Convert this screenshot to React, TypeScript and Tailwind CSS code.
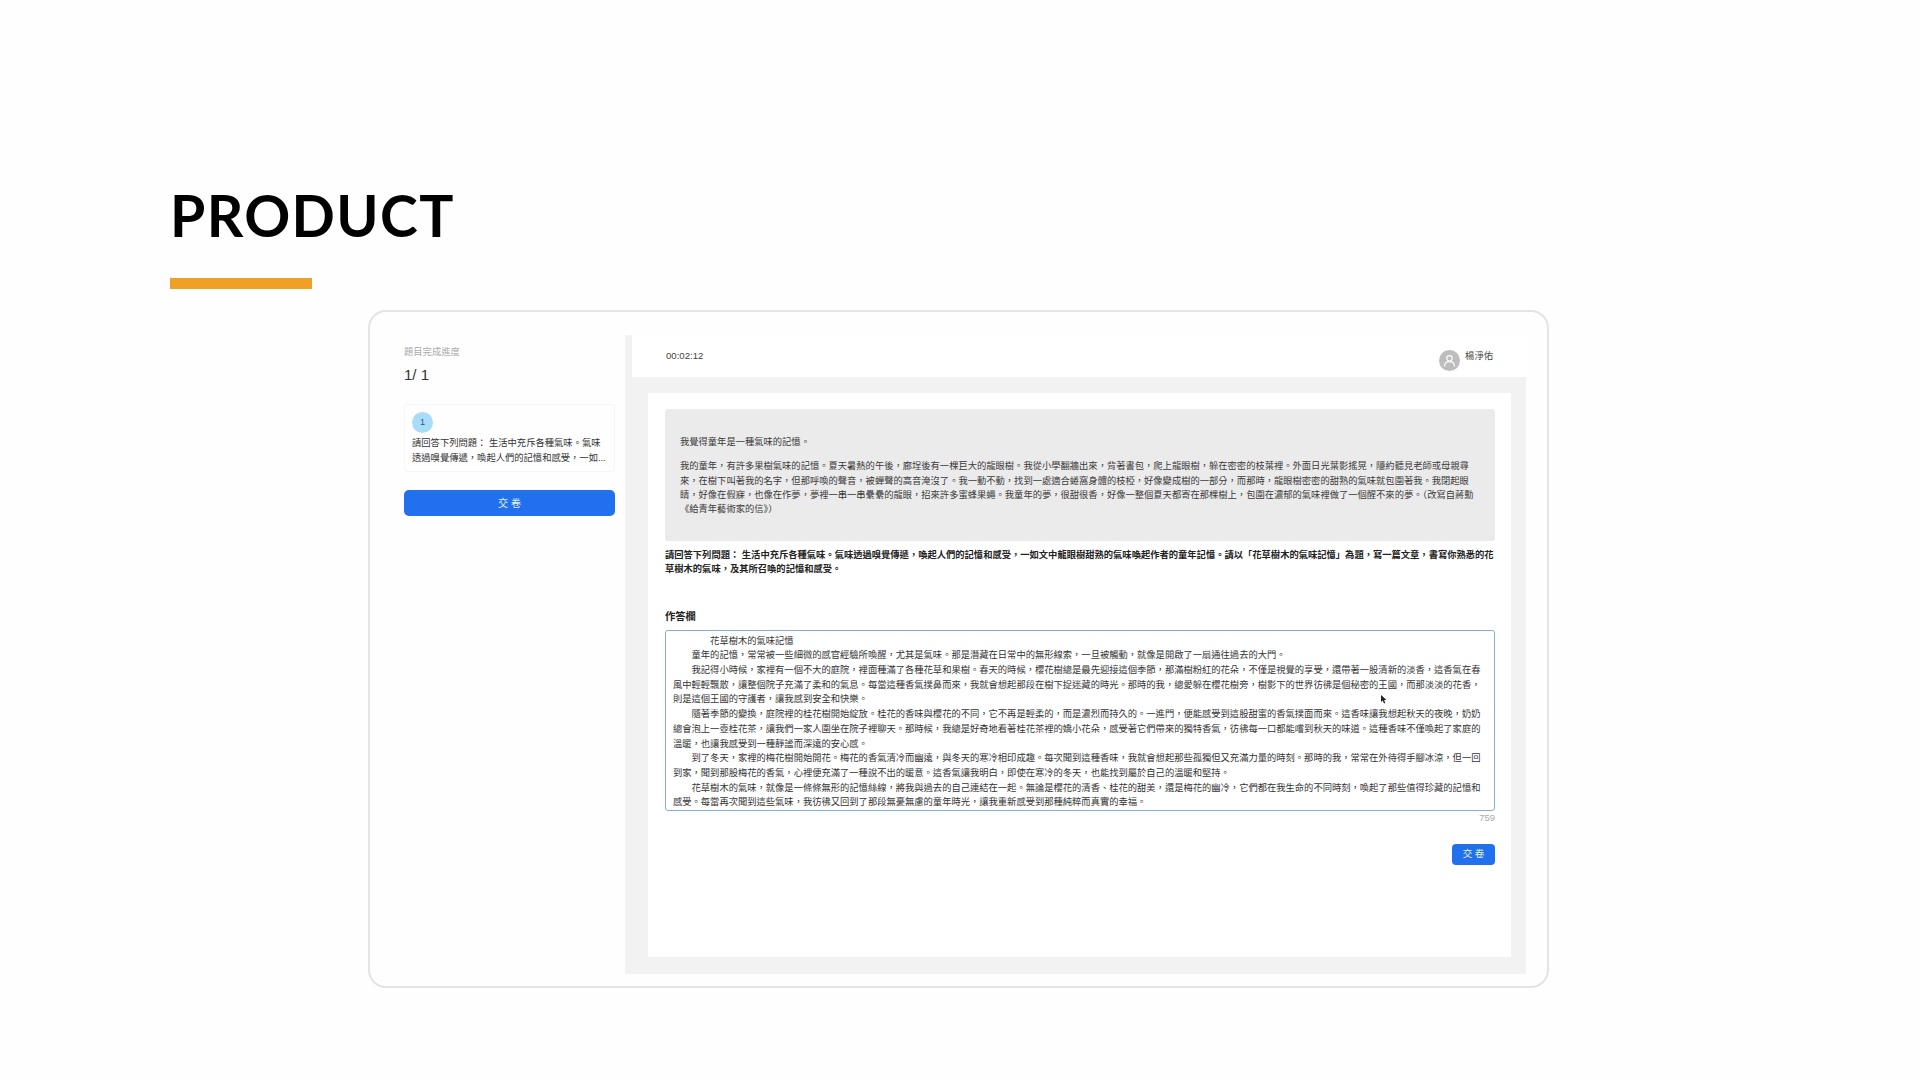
import React from "react";

const CJK = "font-['Liberation_Sans','Noto_Sans_CJK_TC',sans-serif]";

const passage = [
  "我的童年，有許多果樹氣味的記憶。夏天暑熱的午後，廊埕後有一棵巨大的龍眼樹。我從小學翻牆出來，背著書包，爬上龍眼樹，躲在密密的枝葉裡。外面日光葉影搖晃，隱約聽見老師或母親尋",
  "來，在樹下叫著我的名字，但那呼喚的聲音，被蟬聲的高音淹沒了。我一動不動，找到一處適合蜷窩身體的枝椏，好像變成樹的一部分，而那時，龍眼樹密密的甜熟的氣味就包圍著我。我閉起眼",
  "睛，好像在假寐，也像在作夢，夢裡一串一串纍纍的龍眼，招來許多蜜蜂果蠅。我童年的夢，很甜很香，好像一整個夏天都寄在那棵樹上，包圍在濃郁的氣味裡做了一個醒不來的夢。（改寫自蔣勳",
  "《給青年藝術家的信》）",
];

const answer = [
  "　　　　花草樹木的氣味記憶",
  "　　童年的記憶，常常被一些細微的感官經驗所喚醒，尤其是氣味。那是潛藏在日常中的無形線索，一旦被觸動，就像是開啟了一扇通往過去的大門。",
  "　　我記得小時候，家裡有一個不大的庭院，裡面種滿了各種花草和果樹。春天的時候，櫻花樹總是最先迎接這個季節，那滿樹粉紅的花朵，不僅是視覺的享受，還帶著一股清新的淡香，這香氣在春",
  "風中輕輕飄散，讓整個院子充滿了柔和的氣息。每當這種香氣撲鼻而來，我就會想起那段在樹下捉迷藏的時光。那時的我，總愛躲在櫻花樹旁，樹影下的世界彷彿是個秘密的王國，而那淡淡的花香，",
  "則是這個王國的守護者，讓我感到安全和快樂。",
  "　　隨著季節的變換，庭院裡的桂花樹開始綻放。桂花的香味與櫻花的不同，它不再是輕柔的，而是濃烈而持久的。一進門，便能感受到這股甜蜜的香氣撲面而來。這香味讓我想起秋天的夜晚，奶奶",
  "總會泡上一壺桂花茶，讓我們一家人圍坐在院子裡聊天。那時候，我總是好奇地看著桂花茶裡的嬌小花朵，感受著它們帶來的獨特香氣，彷彿每一口都能嚐到秋天的味道。這種香味不僅喚起了家庭的",
  "溫暖，也讓我感受到一種靜謐而深遠的安心感。",
  "　　到了冬天，家裡的梅花樹開始開花。梅花的香氣清冷而幽遠，與冬天的寒冷相印成趣。每次聞到這種香味，我就會想起那些孤獨但又充滿力量的時刻。那時的我，常常在外待得手腳冰涼，但一回",
  "到家，聞到那股梅花的香氣，心裡便充滿了一種說不出的暖意。這香氣讓我明白，即使在寒冷的冬天，也能找到屬於自己的溫暖和堅持。",
  "　　花草樹木的氣味，就像是一條條無形的記憶絲線，將我與過去的自己連結在一起。無論是櫻花的清香、桂花的甜美，還是梅花的幽冷，它們都在我生命的不同時刻，喚起了那些值得珍藏的記憶和",
  "感受。每當再次聞到這些氣味，我彷彿又回到了那段無憂無慮的童年時光，讓我重新感受到那種純粹而真實的幸福。",
];

function Sidebar() {
  return (
    <aside className="w-[255px] shrink-0 pl-[34px] pr-[10px]">
      <div className="text-[9.3px] leading-[14px] mt-[10px] text-[#aaaaaa]">題目完成進度</div>
      <div className="text-[15px] leading-[20px] mt-[6px] text-[#333333]">1/ 1</div>
      <div className="mt-[19px] h-[68px] border border-[#f6f6f6] rounded-[3px] pl-[7px] pt-[7px]">
        <div className="w-[21px] h-[21px] rounded-full bg-[#a9dcf7] flex items-center justify-center text-[9px] text-[#1c5d8c]">1</div>
        <div className="text-[9.3px] leading-[14.7px] mt-[3px] text-[#333333] whitespace-pre">
          {"請回答下列問題： 生活中充斥各種氣味。氣味\n透過嗅覺傳遞，喚起人們的記憶和感受，一如..."}
        </div>
      </div>
      <button className="mt-[18px] w-full h-[26px] rounded-[5px] bg-[#2170ee] text-white/90 text-[10px] flex items-center justify-center">
        交 卷
      </button>
    </aside>
  );
}

function Header() {
  return (
    <header className="h-[42px] ml-[7px] bg-white flex justify-between pl-[34px] pr-[33px] shrink-0">
      <div className="text-[9.6px] leading-[14px] mt-[14px] text-[#444444]">00:02:12</div>
      <div className="flex gap-[5px] mt-[14px]">
        <div className="w-[21px] h-[21px] rounded-full bg-[#bdbdbd] mt-[1px] flex items-center justify-center">
          <svg width="13" height="13" viewBox="0 0 24 24" fill="none" stroke="white" strokeWidth="2" strokeLinecap="round">
            <circle cx="12" cy="8" r="5" />
            <path d="M3 22c0-5 4-8 9-8s9 3 9 8" />
          </svg>
        </div>
        <div className="text-[9.3px] leading-[14px] text-[#444444]">楊淨佑</div>
      </div>
    </header>
  );
}

function Exam() {
  return (
    <div className="flex-1 mr-[15px] ml-[23px] mt-[16px] mb-[17px] bg-white pr-[16px] pl-[17px] pt-[16px] relative">
      <section className="h-[132px] rounded-[3px] bg-[#ebebeb] pl-[15px] pt-[26px] text-[9.29px] text-[#3a3a3a] whitespace-nowrap">
        <p className="leading-[14.3px]">我覺得童年是一種氣味的記憶。</p>
        <p className="leading-[14.3px] mt-[10px]">
          {passage.map((line) => (
            <span key={line} className="block">{line}</span>
          ))}
        </p>
      </section>
      <p className="mt-[7px] text-[9.29px] leading-[14.3px] font-bold text-[#222222] whitespace-nowrap">
        請回答下列問題： 生活中充斥各種氣味。氣味透過嗅覺傳遞，喚起人們的記憶和感受，一如文中龍眼樹甜熟的氣味喚起作者的童年記憶。請以「花草樹木的氣味記憶」為題，寫一篇文章，書寫你熟悉的花
        <br />
        草樹木的氣味，及其所召喚的記憶和感受。
      </p>
      <h3 className="mt-[33px] text-[10.3px] leading-[14px] font-bold text-[#222222]">作答欄</h3>
      <div className="mt-[6px] h-[181px] rounded-[3px] border border-[#7fb0e0] pl-[7px] pt-[3px] text-[9.29px] leading-[14.7px] text-[#333333] whitespace-nowrap">
        {answer.map((line) => (
          <div key={line}>{line}</div>
        ))}
      </div>
      <div className="text-right text-[9.5px] leading-[14px] text-[#aaaaaa]">759</div>
      <div className="flex justify-end mt-[19px]">
        <button className="w-[43px] h-[21px] rounded-[4px] bg-[#2170ee] text-white/90 text-[9.5px] flex items-center justify-center">
          交 卷
        </button>
      </div>
      <svg className="absolute left-[733px] top-[302px]" width="6" height="9" viewBox="0 0 6 9">
        <path d="M0 0v7l1.8-1.5L3 8.5l1.3-.5-1.2-3H5.5z" fill="#222222" />
      </svg>
    </div>
  );
}

export default function App() {
  return (
    <div className={`w-[1920px] h-[1080px] bg-[#fefefe] overflow-hidden pt-[181px] pl-[170px] ${CJK}`}>
      <h1 className="font-['Lato',sans-serif] font-bold text-[57px] leading-[68px] text-black tracking-[1.4px]">PRODUCT</h1>
      <div className="mt-[29px] w-[142px] h-[11px] bg-[#f0a024]" />
      <div className="mt-[21px] ml-[198px] w-[1181px] h-[678px] rounded-[18px] border-2 border-[#e4e4e4] flex pt-[23px] pr-[21px] pb-[12px]">
        <Sidebar />
        <main className="flex-1 flex flex-col bg-[#f2f2f2]">
          <Header />
          <Exam />
        </main>
      </div>
    </div>
  );
}
